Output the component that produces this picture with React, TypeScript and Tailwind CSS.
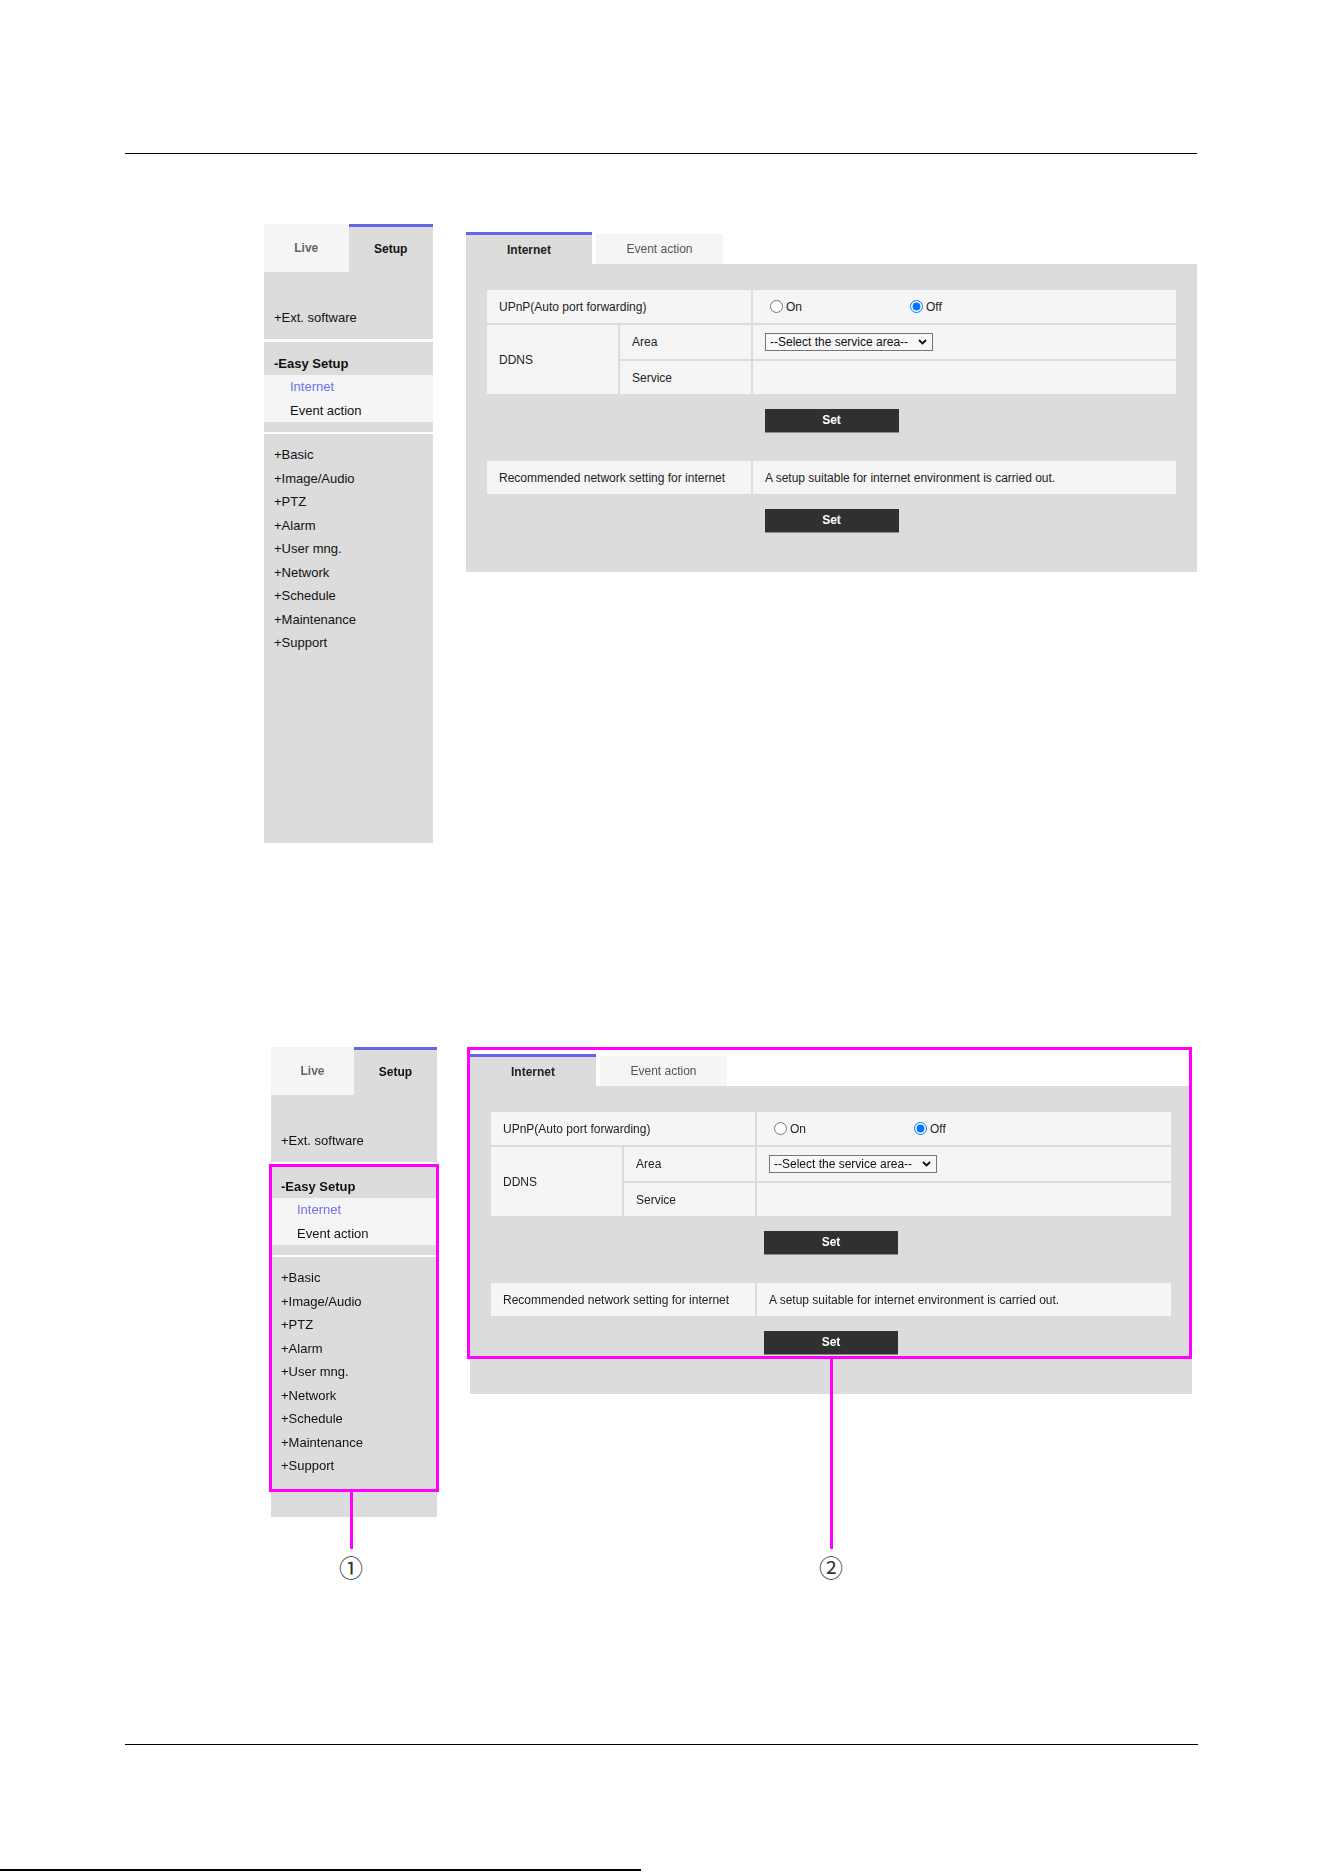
import React from "react";

const MENU_ITEMS = [
  "+Basic",
  "+Image/Audio",
  "+PTZ",
  "+Alarm",
  "+User mng.",
  "+Network",
  "+Schedule",
  "+Maintenance",
  "+Support",
];

function SideMenu({ widthClass, lowerClass }: { widthClass: string; lowerClass: string }) {
  return (
    <div className={`${widthClass} flex flex-col shrink-0`}>
      <div className="flex h-[48px]">
        <div className="flex-1 bg-[#f5f5f5] flex items-center justify-center text-[12px] font-bold text-[#666] leading-[15px]">
          Live
        </div>
        <div className="flex-1 bg-[#dcdcdc] border-t-[3px] border-[#6464e6] flex items-center justify-center text-[12px] font-bold text-[#111] leading-[15px]">
          Setup
        </div>
      </div>
      <div className="h-[67px] bg-[#dcdcdc] flex items-end pb-[14px] pl-[10px] text-[13px] leading-[15px] text-[#111]">
        +Ext. software
      </div>
      <div className="h-[3px] bg-white" />
      <div className="h-[33px] bg-[#dcdcdc] pt-[14px] pl-[10px] text-[13px] leading-[15px] font-bold text-[#111]">
        -Easy Setup
      </div>
      <div className="bg-[#f5f5f5] pl-[26px] text-[13px]">
        <div className="h-[23.5px] flex items-center text-[#7070ee]">Internet</div>
        <div className="h-[23.5px] flex items-center text-[#111]">Event action</div>
      </div>
      <div className="h-[10px] bg-[#dcdcdc]" />
      <div className="h-[2px] bg-white" />
      <div className={`${lowerClass} bg-[#dcdcdc] pt-[9px] pl-[10px] text-[13px] text-[#111]`}>
        {MENU_ITEMS.map((item) => (
          <div key={item} className="h-[23.5px] flex items-center">
            {item}
          </div>
        ))}
      </div>
    </div>
  );
}

function SetButton() {
  return (
    <button
      type="button"
      className="mx-auto block w-[134px] h-[24px] bg-[#303030] border-b border-[#8a8a8a] text-white text-[12px] font-bold leading-[23px]"
    >
      Set
    </button>
  );
}

function SettingsPanel({ widthClass, group }: { widthClass: string; group: string }) {
  return (
    <div className={`${widthClass} shrink-0`}>
      <div className="flex items-end gap-[4px]">
        <div className="w-[126px] h-[32px] bg-[#dcdcdc] border-t-[3px] border-[#6464e6] flex items-center justify-center text-[12px] font-bold text-[#222]">
          Internet
        </div>
        <div className="w-[127px] h-[30px] bg-[#f5f5f5] flex items-center justify-center text-[12px] text-[#555]">
          Event action
        </div>
      </div>
      <div className="bg-[#dcdcdc] px-[21px] pt-[26px] pb-[39px] text-[12px] text-[#222]">
        <div className="grid grid-cols-[131px_131px_1fr] grid-rows-[33px_34px_33px] gap-[2px]">
          <div className="col-span-2 bg-[#f5f5f5] flex items-center pl-[12px]">
            UPnP(Auto port forwarding)
          </div>
          <div className="bg-[#f5f5f5] flex items-center pl-[12px]">
            <label className="w-[140px] flex items-center">
              <input
                type="radio"
                name={`upnp-${group}`}
                className="w-[13px] h-[13px] ml-[5px] mr-[3px] accent-[#0075ff]"
              />
              <span>On</span>
            </label>
            <label className="flex items-center">
              <input
                type="radio"
                name={`upnp-${group}`}
                defaultChecked
                className="w-[13px] h-[13px] ml-[5px] mr-[3px] accent-[#0075ff]"
              />
              <span>Off</span>
            </label>
          </div>
          <div className="row-span-2 bg-[#f5f5f5] flex items-center pl-[12px]">DDNS</div>
          <div className="bg-[#f5f5f5] flex items-center pl-[12px]">Area</div>
          <div className="bg-[#f5f5f5] flex items-center pl-[12px]">
            <div className="relative w-[168px] h-[18px]">
              <select className="appearance-none w-full h-full border border-[#767676] bg-[#f8f8f8] pl-[4px] text-[12px] leading-[16px] text-[#111]">
                <option>--Select the service area--</option>
              </select>
              <svg
                className="absolute right-[6px] top-[6px] pointer-events-none"
                width="9"
                height="6"
                viewBox="0 0 9 6"
                fill="none"
              >
                <path d="M1 1l3.5 3.5L8 1" stroke="#111" strokeWidth="1.8" />
              </svg>
            </div>
          </div>
          <div className="bg-[#f5f5f5] flex items-center pl-[12px]">Service</div>
          <div className="bg-[#f5f5f5]" />
        </div>
        <div className="mt-[15px]">
          <SetButton />
        </div>
        <div className="mt-[28px] grid grid-cols-[264px_1fr] h-[33px] gap-[2px]">
          <div className="bg-[#f5f5f5] flex items-center pl-[12px]">
            Recommended network setting for internet
          </div>
          <div className="bg-[#f5f5f5] flex items-center pl-[12px]">
            A setup suitable for internet environment is carried out.
          </div>
        </div>
        <div className="mt-[15px]">
          <SetButton />
        </div>
      </div>
    </div>
  );
}

export default function App() {
  return (
    <div className="relative w-[1323px] h-[1872px] bg-white font-['Liberation_Sans',Arial,sans-serif] overflow-hidden">
      {/* header rule */}
      <div className="pt-[153px] pl-[125px]">
        <div className="w-[1072px] h-px bg-black" />
      </div>

      {/* setup screen */}
      <div className="mt-[70px] flex items-start pl-[264px] gap-[33px]">
        <SideMenu widthClass="w-[169px]" lowerClass="h-[409px]" />
        <div className="mt-[8px]">
          <SettingsPanel widthClass="w-[731px]" group="a" />
        </div>
      </div>

      {/* annotated setup screen */}
      <div className="relative mt-[204px] h-[560px]">
        <div className="flex items-start pl-[271px] gap-[33px] blur-[0.4px]">
          <SideMenu widthClass="w-[166px]" lowerClass="h-[260px]" />
          <div className="mt-[7px]">
            <SettingsPanel widthClass="w-[722px]" group="b" />
          </div>
        </div>

        {/* callout frames */}
        <div className="absolute left-[269px] top-[117px] w-[170px] h-[328px] border-[3px] border-[#ff00ff]" />
        <div className="absolute left-[467px] top-0 w-[725px] h-[312px] border-[3px] border-[#ff00ff]" />

        {/* leader lines */}
        <div className="absolute left-[350px] top-[445px] w-[3px] h-[57px] bg-[#ff00ff]" />
        <div className="absolute left-[830px] top-[312px] w-[3px] h-[190px] bg-[#ff00ff]" />

        {/* callout numbers */}
        <div className="absolute left-[336px] top-[505px] w-[30px] h-[30px] flex items-center justify-center text-[24px] leading-none text-[#333] font-['Noto_Sans_CJK_JP',sans-serif]">
          ①
        </div>
        <div className="absolute left-[816px] top-[505px] w-[30px] h-[30px] flex items-center justify-center text-[24px] leading-none text-[#333] font-['Noto_Sans_CJK_JP',sans-serif]">
          ②
        </div>
      </div>

      {/* footer rule */}
      <div className="mt-[137px] pl-[125px]">
        <div className="w-[1073px] h-px bg-black" />
      </div>
      <div className="mt-[124px] w-[641px] h-[2px] bg-black" />
    </div>
  );
}
